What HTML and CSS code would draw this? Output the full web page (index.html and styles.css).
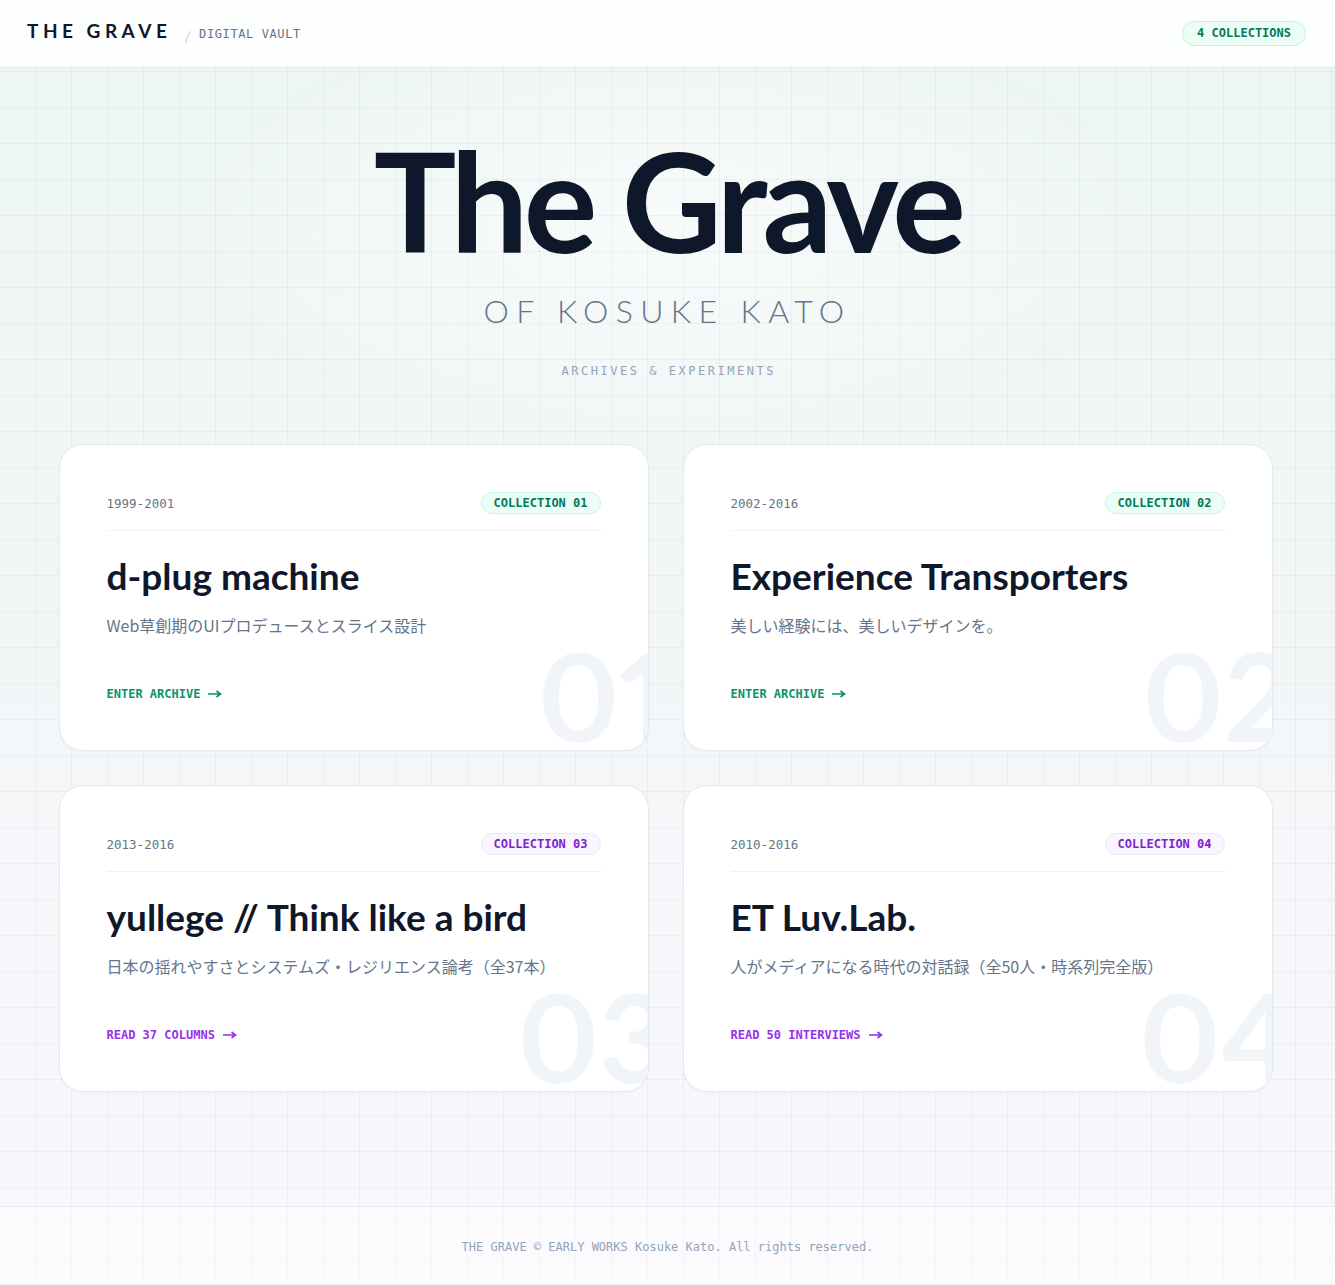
FILE: index.html
```html
<!DOCTYPE html>
<html lang="ja">
<head>
<meta charset="utf-8">
<title>The Grave of Kosuke Kato</title>
<link rel="stylesheet" href="styles.css">
</head>
<body>
<header class="site-header">
  <div class="brand">
    <span class="brand-name">THE GRAVE</span>
    <span class="brand-sep">/</span>
    <span class="brand-sub">DIGITAL VAULT</span>
  </div>
  <span class="count-badge">4 COLLECTIONS</span>
</header>

<main class="main">
  <section class="hero">
    <h1 class="hero-title">The Grave</h1>
    <p class="hero-sub">OF KOSUKE KATO</p>
    <p class="hero-tag">ARCHIVES &amp; EXPERIMENTS</p>
  </section>

  <section class="cards">
    <article class="card card-green">
      <div class="card-head">
        <span class="card-date">1999-2001</span>
        <span class="card-badge">COLLECTION 01</span>
      </div>
      <h2 class="card-title">d-plug machine</h2>
      <p class="card-desc">Web草創期のUIプロデュースとスライス設計</p>
      <a class="card-link" href="#">ENTER ARCHIVE <svg class="arrow" width="14" height="8" viewBox="0 0 14 8" aria-hidden="true"><path d="M0 4H12M8.5 1L12.5 4L8.5 7" fill="none" stroke="currentColor" stroke-width="1.6"/></svg></a>
      <span class="card-num">01</span>
    </article>

    <article class="card card-green">
      <div class="card-head">
        <span class="card-date">2002-2016</span>
        <span class="card-badge">COLLECTION 02</span>
      </div>
      <h2 class="card-title">Experience Transporters</h2>
      <p class="card-desc">美しい経験には、美しいデザインを。</p>
      <a class="card-link" href="#">ENTER ARCHIVE <svg class="arrow" width="14" height="8" viewBox="0 0 14 8" aria-hidden="true"><path d="M0 4H12M8.5 1L12.5 4L8.5 7" fill="none" stroke="currentColor" stroke-width="1.6"/></svg></a>
      <span class="card-num">02</span>
    </article>

    <article class="card card-purple">
      <div class="card-head">
        <span class="card-date">2013-2016</span>
        <span class="card-badge">COLLECTION 03</span>
      </div>
      <h2 class="card-title">yullege // Think like a bird</h2>
      <p class="card-desc">日本の揺れやすさとシステムズ・レジリエンス論考（全37本）</p>
      <a class="card-link" href="#">READ 37 COLUMNS <svg class="arrow" width="14" height="8" viewBox="0 0 14 8" aria-hidden="true"><path d="M0 4H12M8.5 1L12.5 4L8.5 7" fill="none" stroke="currentColor" stroke-width="1.6"/></svg></a>
      <span class="card-num">03</span>
    </article>

    <article class="card card-purple">
      <div class="card-head">
        <span class="card-date">2010-2016</span>
        <span class="card-badge">COLLECTION 04</span>
      </div>
      <h2 class="card-title">ET Luv.Lab.</h2>
      <p class="card-desc">人がメディアになる時代の対話録（全50人・時系列完全版）</p>
      <a class="card-link" href="#">READ 50 INTERVIEWS <svg class="arrow" width="14" height="8" viewBox="0 0 14 8" aria-hidden="true"><path d="M0 4H12M8.5 1L12.5 4L8.5 7" fill="none" stroke="currentColor" stroke-width="1.6"/></svg></a>
      <span class="card-num">04</span>
    </article>
  </section>
</main>

<footer class="site-footer">
  <p>THE GRAVE © EARLY WORKS Kosuke Kato. All rights reserved.</p>
</footer>
</body>
</html>
```

FILE: styles.css
```css
* { box-sizing: border-box; }

html, body { margin: 0; padding: 0; }

body {
  font-family: Lato, "Noto Sans CJK JP", sans-serif;
  color: #0f172a;
  background-color: #f4f7f8;
  background-image:
    linear-gradient(to right, rgba(148, 163, 184, 0.11) 1px, transparent 1px),
    linear-gradient(to bottom, rgba(148, 163, 184, 0.11) 1px, transparent 1px),
    radial-gradient(ellipse 700px 300px at 50% 230px, rgba(255, 255, 255, 0.55), transparent 70%),
    linear-gradient(180deg, #edf6f4 0%, #f2f6f7 45%, #f6f7fa 75%, #f8f8fc 100%);
  background-size: 36px 36px, 36px 36px, auto, auto;
  background-position: 35px 35px, 35px 35px, 0 0, 0 0;
}

/* Header */
.site-header {
  height: 68px;
  padding: 0 29px 0 27px;
  display: flex;
  align-items: center;
  justify-content: space-between;
  background: rgba(255, 255, 255, 0.86);
  border-bottom: 1px solid #e6ebf0;
}

.brand {
  display: flex;
  align-items: baseline;
  margin-bottom: 7px;
}

.brand-name {
  font-family: Lato, sans-serif;
  font-weight: 700;
  font-size: 19px;
  letter-spacing: 4.5px;
  color: #0f172a;
}

.brand-sep {
  font-family: Lato, sans-serif;
  font-size: 15px;
  color: #cbd5e1;
  margin: 0 8px 0 13px;
  position: relative;
  top: 4px;
}

.brand-sub {
  font-family: "DejaVu Sans Mono", monospace;
  font-size: 12px;
  letter-spacing: 0.6px;
  color: #64748b;
}

.count-badge {
  font-family: "DejaVu Sans Mono", monospace;
  font-size: 12px;
  font-weight: 700;
  color: #047857;
  background: #ecfdf5;
  border: 1px solid #bbf7d0;
  border-radius: 999px;
  padding: 4px 14px;
  line-height: 15px;
}

/* Hero */
.main {
  padding: 63px 0 114px;
}

.hero {
  text-align: center;
}

.hero-title {
  margin: 0;
  font-family: Lato, sans-serif;
  font-weight: 700;
  font-size: 138px;
  line-height: 1;
  letter-spacing: -4.6px;
  color: #0f172a;
}

.hero-sub {
  margin: 26px 0 0;
  font-family: Lato, sans-serif;
  font-weight: 300;
  font-size: 32px;
  line-height: 1;
  letter-spacing: 0.23em;
  color: #64748b;
}

.hero-tag {
  margin: 36px 0 0;
  font-family: "DejaVu Sans Mono", monospace;
  font-size: 12px;
  line-height: 16px;
  letter-spacing: 0.21em;
  padding-left: 0.21em;
  color: #94a3b8;
}

/* Cards */
.cards {
  width: 1214px;
  margin: 65px auto 0;
  display: grid;
  grid-template-columns: 1fr 1fr;
  gap: 34px;
  position: relative;
  left: -2px;
}

.card {
  position: relative;
  overflow: hidden;
  background: #ffffff;
  border: 1px solid #e5e9ef;
  border-radius: 24px;
  padding: 47px 47px 48px;
  box-shadow: 0 1px 3px rgba(15, 23, 42, 0.03);
  display: flex;
  flex-direction: column;
}

.card-head {
  display: flex;
  align-items: center;
  justify-content: space-between;
  padding-bottom: 16px;
  border-bottom: 1px solid #eef1f5;
  position: relative;
  z-index: 1;
}

.card-date {
  font-family: "DejaVu Sans Mono", monospace;
  font-size: 12.5px;
  color: #64748b;
}

.card-badge {
  font-family: "DejaVu Sans Mono", monospace;
  font-size: 12px;
  font-weight: 700;
  line-height: 14px;
  padding: 3px 12px;
  border-radius: 999px;
}

.card-green .card-badge {
  color: #047857;
  background: #ecfdf5;
  border: 1px solid #c6f6dc;
}

.card-purple .card-badge {
  color: #7e22ce;
  background: #faf5ff;
  border: 1px solid #f0e4fc;
}

.card-title {
  margin: 23px 0 0;
  font-family: Lato, sans-serif;
  font-weight: 700;
  font-size: 37px;
  line-height: 43px;
  letter-spacing: 0;
  color: #0f172a;
  position: relative;
  z-index: 1;
}

.card-desc {
  margin: 16px 0 0;
  font-family: "Noto Sans CJK JP", sans-serif;
  font-size: 16px;
  line-height: 24px;
  color: #64748b;
  position: relative;
  z-index: 1;
}

.card-link {
  margin-top: 49px;
  align-self: flex-start;
  display: flex;
  align-items: center;
  gap: 8px;
  font-family: "DejaVu Sans Mono", monospace;
  font-size: 12px;
  font-weight: 700;
  line-height: 16px;
  text-decoration: none;
  position: relative;
  z-index: 1;
}

.card-link .arrow {
  display: block;
}

.card-green .card-link { color: #059669; }
.card-purple .card-link { color: #9333ea; }

.card-num {
  position: absolute;
  right: -22px;
  bottom: -6px;
  font-family: Lato, sans-serif;
  font-weight: 700;
  font-size: 122px;
  line-height: 1;
  font-variant-numeric: proportional-nums;
  color: #f1f4f9;
  z-index: 0;
  pointer-events: none;
}

/* Footer */
.site-footer {
  height: 78px;
  display: flex;
  align-items: center;
  justify-content: center;
  border-top: 1px solid #e8ecf1;
  background: rgba(255, 255, 255, 0.45);
}

.site-footer p {
  margin: 0;
  padding-top: 3px;
  font-family: "DejaVu Sans Mono", monospace;
  font-size: 12px;
  color: #94a3b8;
}
```
